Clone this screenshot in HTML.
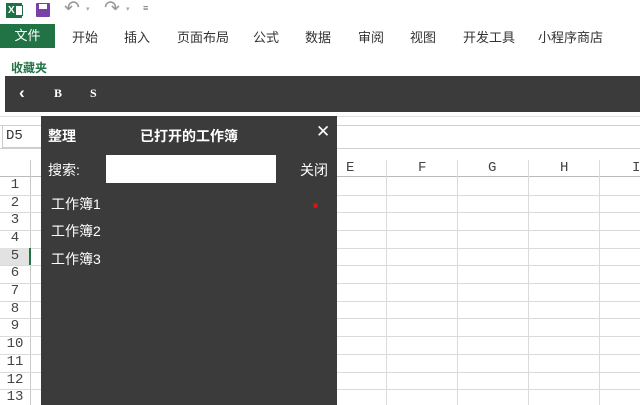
<!DOCTYPE html>
<html><head><meta charset="utf-8"><style>
*{margin:0;padding:0;box-sizing:border-box}
body{width:640px;height:405px;overflow:hidden;background:#fff;font-family:"Liberation Sans","Noto Sans CJK SC",sans-serif;position:relative}
.a{position:absolute}
.tab{position:absolute;top:27px;font-size:13px;color:#333}
.mono{font-family:"Liberation Mono","Noto Sans CJK SC",monospace}
.row{position:absolute;left:0;width:30px;text-align:center;font-size:14px;color:#444}
.hl{position:absolute;left:0;width:640px;height:1px;background:#dadada}
.vl{position:absolute;top:160px;width:1px;height:245px;background:#dadada}
</style></head><body>
<!-- QAT -->
<div class="a" style="left:6px;top:3px;width:16px;height:15px;background:#1e7145;color:#fff;font-size:10px;font-weight:bold;line-height:15px;padding-left:2px">X</div>
<div class="a" style="left:15px;top:5px;width:8px;height:11px;border:1px solid #1e7145;background:#fff"></div>
<div class="a" style="left:36px;top:3px;width:14px;height:14px;background:#7b3fa8;border-radius:1px"></div>
<div class="a" style="left:39px;top:4px;width:8px;height:5px;background:#fff"></div>
<div class="a" style="left:64px;top:-3px;font-size:19px;color:#999">↶</div>
<div class="a" style="left:86px;top:5px;font-size:7px;color:#aaa">▾</div>
<div class="a" style="left:104px;top:-3px;font-size:19px;color:#999">↷</div>
<div class="a" style="left:126px;top:5px;font-size:7px;color:#aaa">▾</div>
<div class="a" style="left:143px;top:3px;font-size:9px;color:#666">≡</div>
<!-- tabs -->
<div class="a" style="left:0;top:24px;width:55px;height:24px;background:#217346;color:#fff;font-size:13px;text-align:center;line-height:24px">文件</div>
<div class="tab" style="left:72px">开始</div>
<div class="tab" style="left:124px">插入</div>
<div class="tab" style="left:177px">页面布局</div>
<div class="tab" style="left:253px">公式</div>
<div class="tab" style="left:305px">数据</div>
<div class="tab" style="left:358px">审阅</div>
<div class="tab" style="left:410px">视图</div>
<div class="tab" style="left:463px">开发工具</div>
<div class="tab" style="left:538px">小程序商店</div>
<div class="a" style="left:11px;top:59px;font-size:12px;color:#217346;font-weight:bold">收藏夹</div>
<!-- dark bar -->
<div class="a" style="left:5px;top:76px;width:635px;height:36px;background:#3c3b3b"></div>
<div class="a" style="left:19px;top:83px;color:#fff;font-size:17px;font-weight:bold">‹</div>
<div class="a" style="left:54px;top:86px;color:#fff;font-size:12px;font-weight:bold;font-family:'Liberation Serif',serif">B</div>
<div class="a" style="left:90px;top:86px;color:#fff;font-size:12px;font-weight:bold;font-family:'Liberation Serif',serif">S</div>
<!-- formula bar -->
<div class="a" style="left:0;top:116px;width:640px;height:1px;background:#e0e0e0"></div>
<div class="a" style="left:2px;top:125px;width:40px;height:23px;border:1px solid #ccc"></div>
<div class="a mono" style="left:6px;top:128px;font-size:14px;color:#333">D5</div>
<div class="hl" style="top:125px;background:#d0d0d0"></div>
<div class="hl" style="top:148px;background:#d0d0d0"></div>
<!-- col headers -->
<div class="hl" style="top:176px;background:#bbb"></div>
<div class="a" style="left:30px;top:160px;width:1px;height:245px;background:#c8c8c8"></div>
<div class="vl" style="left:386px"></div>
<div class="vl" style="left:457px"></div>
<div class="vl" style="left:528px"></div>
<div class="vl" style="left:599px"></div>
<div class="a mono" style="left:346px;top:160px;font-size:14px;color:#444">E</div>
<div class="a mono" style="left:418px;top:160px;font-size:14px;color:#444">F</div>
<div class="a mono" style="left:488px;top:160px;font-size:14px;color:#444">G</div>
<div class="a mono" style="left:560px;top:160px;font-size:14px;color:#444">H</div>
<div class="a mono" style="left:632px;top:160px;font-size:14px;color:#444">I</div>
<div class="hl" style="top:195px"></div><div class="hl" style="top:212px"></div><div class="hl" style="top:230px"></div><div class="hl" style="top:248px"></div><div class="hl" style="top:265px"></div><div class="hl" style="top:283px"></div><div class="hl" style="top:301px"></div><div class="hl" style="top:318px"></div><div class="hl" style="top:336px"></div><div class="hl" style="top:354px"></div><div class="hl" style="top:372px"></div><div class="hl" style="top:389px"></div>
<div class="a" style="left:0;top:248px;width:30px;height:17px;background:#e2e2e2"></div>
<div class="a" style="left:29px;top:248px;width:2px;height:17px;background:#217346"></div>
<div class="row mono" style="top:177px">1</div><div class="row mono" style="top:195px">2</div><div class="row mono" style="top:212px">3</div><div class="row mono" style="top:230px">4</div><div class="row mono" style="top:248px">5</div><div class="row mono" style="top:265px">6</div><div class="row mono" style="top:283px">7</div><div class="row mono" style="top:301px">8</div><div class="row mono" style="top:318px">9</div><div class="row mono" style="top:336px">10</div><div class="row mono" style="top:354px">11</div><div class="row mono" style="top:372px">12</div><div class="row mono" style="top:389px">13</div>
<!-- panel -->
<div class="a" style="left:41px;top:116px;width:296px;height:289px;background:#3c3b3b"></div>
<div class="a" style="left:48px;top:126px;color:#fff;font-size:14px;font-weight:bold">整理</div>
<div class="a" style="left:140px;top:126px;color:#fff;font-size:14px;font-weight:bold">已打开的工作簿</div>
<div class="a" style="left:316px;top:122px;color:#fff;font-size:17px">✕</div>
<div class="a" style="left:48px;top:160px;color:#fff;font-size:14px">搜索:</div>
<div class="a" style="left:106px;top:155px;width:170px;height:28px;background:#fff"></div>
<div class="a" style="left:300px;top:160px;color:#fff;font-size:14px">关闭</div>
<div class="a" style="left:51px;top:194px;color:#fff;font-size:14px">工作簿1</div>
<div class="a" style="left:51px;top:221px;color:#fff;font-size:14px">工作簿2</div>
<div class="a" style="left:51px;top:249px;color:#fff;font-size:14px">工作簿3</div>
<div class="a" style="left:313px;top:203px;width:5px;height:5px;background:#e01010;border-radius:50%"></div>
</body></html>
